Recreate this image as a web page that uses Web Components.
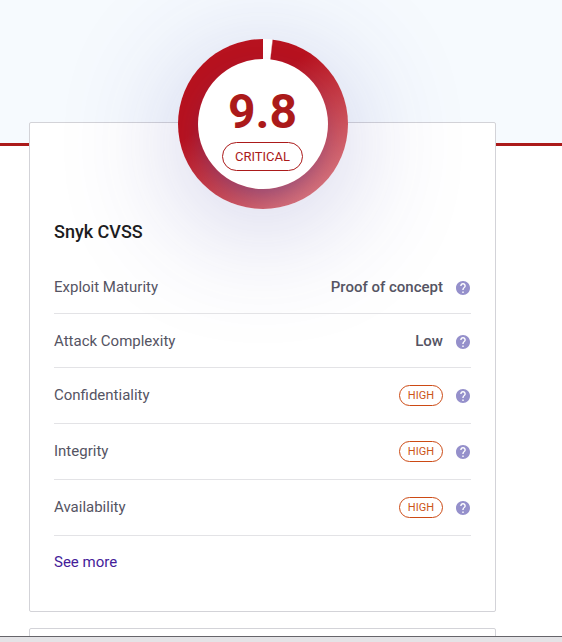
<!DOCTYPE html>
<html lang="en">
<head>
<meta charset="utf-8">
<meta name="viewport" content="width=device-width, initial-scale=1">
<title>Snyk CVSS</title>
<style>
  body { margin: 0; background: #fff; color: #555463; font: 400 15px/21px Roboto, "Liberation Sans", sans-serif; }
</style>
</head>
<body>
<vuln-page>
  <severity-card>
    <score-gauge slot="gauge" score="9.8" level="Critical"></score-gauge>
    <span slot="title">Snyk CVSS</span>
    <metric-row label="Exploit Maturity">Proof of concept</metric-row>
    <metric-row label="Attack Complexity">Low</metric-row>
    <metric-row label="Confidentiality"><severity-badge>HIGH</severity-badge></metric-row>
    <metric-row label="Integrity"><severity-badge>HIGH</severity-badge></metric-row>
    <metric-row label="Availability"><severity-badge>HIGH</severity-badge></metric-row>
  </severity-card>
</vuln-page>

<script>
  function define(name, html, setup) {
    customElements.define(name, class extends HTMLElement {
      constructor() {
        super();
        this.attachShadow({ mode: "open" }).innerHTML = html;
      }
      connectedCallback() {
        if (setup) setup(this, this.shadowRoot);
      }
    });
  }

  define("vuln-page", `
    <style>
      :host { display: flex; flex-direction: column; height: 100vh; overflow: hidden; }
      header { flex: none; height: 143px; background: #f6fafe; border-bottom: 3px solid #ab1a1a; }
      main { flex: 1; min-height: 0; display: flex; flex-direction: column; gap: 16px; margin-top: -24px; padding: 0 66px 0 29px; }
      .next { flex: none; height: 80px; box-sizing: border-box; background: #fff; border: 1px solid #d3d3d8; border-radius: 2px; }
      footer { flex: none; position: relative; height: 5px; background: #e4e3e6; border-top: 1px solid #66656a; }
    </style>
    <header></header>
    <main><slot></slot><section class="next"></section></main>
    <footer></footer>`);

  define("severity-card", `
    <style>
      :host { display: block; flex: none; box-sizing: border-box; padding: 0 24px 38px; background: #fff; border: 1px solid #d3d3d8; border-radius: 2px; }
      .gauge { display: flex; justify-content: center; margin-top: -84px; }
      h2 { position: relative; margin: 11px 0 16px; color: #1c1c21; font-size: 18px; line-height: 24px; font-weight: 500; }
      .rows { position: relative; }
      a { display: inline-block; position: relative; margin-top: 16px; color: #441c99; text-decoration: none; }
    </style>
    <div class="gauge"><slot name="gauge"></slot></div>
    <h2><slot name="title"></slot></h2>
    <div class="rows"><slot></slot></div>
    <a href="#more">See more</a>`);

  define("score-gauge", `
    <style>
      :host { display: grid; width: 170px; height: 170px; border-radius: 50%;
        background: conic-gradient(#fff 6deg, transparent 7deg 359.9deg, #fff), linear-gradient(145deg, #b7121f 36%, #dc8088 94%);
        box-shadow: 0 20px 120px rgba(57, 54, 160, .25); }
      .disc { display: flex; flex-direction: column; align-items: center; box-sizing: border-box; margin: 20px; padding-top: 29px; border-radius: 50%;
        background: #fff; color: #ab1a1a; gap: 6px; }
      .shade, .disc { grid-area: 1 / 1; }
      .shade { border-radius: 50%; overflow: hidden; display: grid; }
      .shade::before { content: ""; margin: 20px; border-radius: 50%; box-shadow: 0 12px 28px -8px rgba(70, 60, 150, .55); }
      strong { font-size: 48px; line-height: 48px; font-weight: 700; }
      .level { box-sizing: border-box; height: 29px; padding: 0 12px; border: 1px solid; border-radius: 15px; font-size: 13px; line-height: 27px; text-transform: uppercase; }
    </style>
    <div class="shade"></div>
    <div class="disc"><strong></strong><span class="level"></span></div>`,
    (el, root) => {
      root.querySelector("strong").textContent = el.getAttribute("score");
      root.querySelector(".level").textContent = el.getAttribute("level");
    });

  define("severity-badge", `
    <style>
      :host { display: block; box-sizing: border-box; height: 21px; padding: 0 8px; border: 1px solid #cc4a14; border-radius: 11px; color: #cc5419; font-size: 11px; line-height: 19px; font-weight: 400; }
    </style>
    <slot></slot>`);

  define("metric-row", `
    <style>
      :host { display: flex; align-items: center; box-sizing: border-box; min-height: 54px; padding-top: 2px; border-bottom: 1px solid #e3e3e6; }
      :host([tall]) { min-height: 56px; padding-top: 0; }
      .label { flex: 1; }
      .value { font-weight: 500; }
      button { display: flex; margin: 0 1px 0 13px; padding: 0; border: 0; background: none; color: #9590cb; cursor: pointer; }
      svg { width: 14px; height: 14px; fill: currentColor; }
    </style>
    <span class="label"></span>
    <span class="value"><slot></slot></span>
    <button type="button">
      <svg viewBox="2 2 20 20" aria-hidden="true"><path d="M12 2C6.48 2 2 6.48 2 12s4.48 10 10 10 10-4.48 10-10S17.52 2 12 2zm1 17h-2v-2h2v2zm2.07-7.75l-.9.92C13.45 12.9 13 13.5 13 15h-2v-.5c0-1.1.45-2.1 1.17-2.83l1.24-1.26c.37-.36.59-.86.59-1.41 0-1.1-.9-2-2-2s-2 .9-2 2H8c0-2.21 1.79-4 4-4s4 1.79 4 4c0 .88-.36 1.68-.93 2.25z"/></svg>
    </button>`,
    (el, root) => {
      const label = el.getAttribute("label");
      root.querySelector(".label").textContent = label;
      root.querySelector("button").setAttribute("aria-label", "About " + label);
      el.toggleAttribute("tall", !!el.querySelector("severity-badge"));
    });
</script>
</body>
</html>
